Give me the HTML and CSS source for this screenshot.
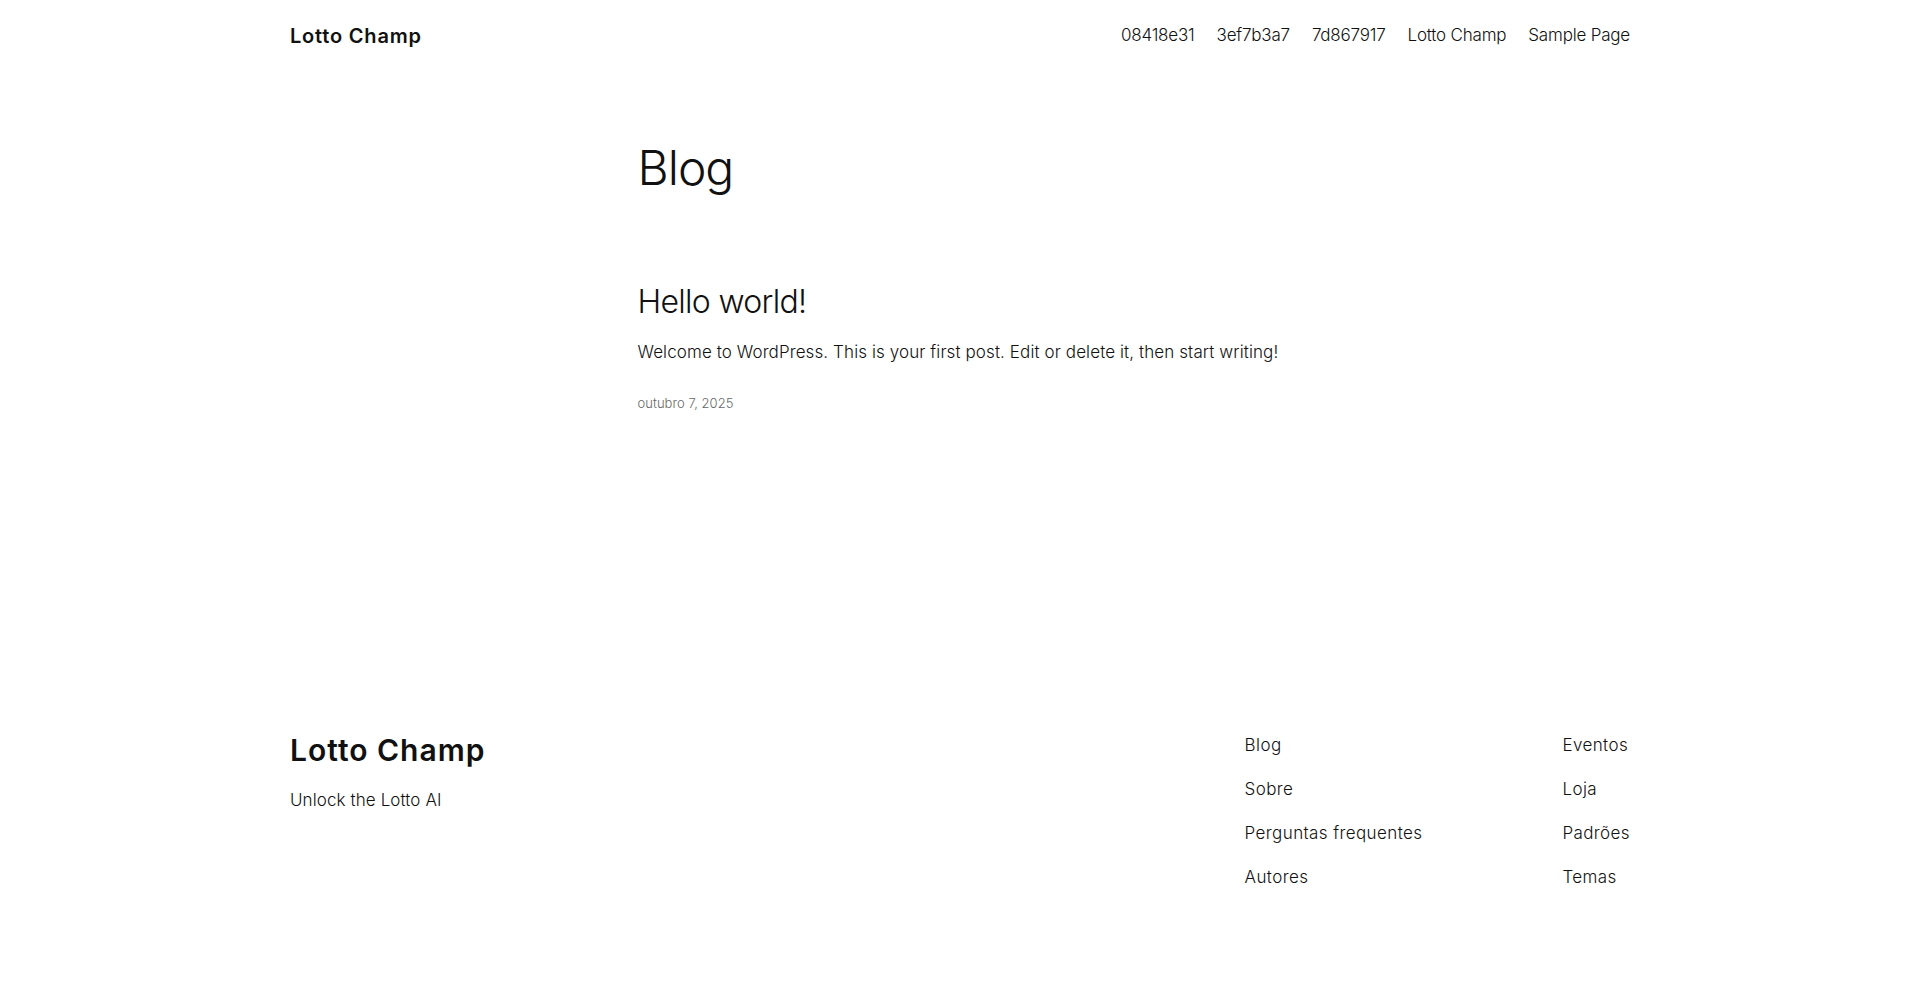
FILE: index.html
```html
<!DOCTYPE html>
<html lang="pt-BR">
<head>
<meta charset="utf-8">
<title>Blog – Lotto Champ</title>
<link rel="stylesheet" href="styles.css">
</head>
<body>
<header class="site-header">
  <div class="wide">
    <a class="site-title" href="#">Lotto Champ</a>
    <nav class="main-nav">
      <a href="#">08418e31</a>
      <a href="#">3ef7b3a7</a>
      <a href="#">7d867917</a>
      <a href="#">Lotto Champ</a>
      <a href="#">Sample Page</a>
    </nav>
  </div>
</header>
<main class="site-main">
  <div class="content">
    <h1 class="page-title">Blog</h1>
    <article class="post">
      <h2 class="post-title"><a href="#">Hello world!</a></h2>
      <p class="post-excerpt">Welcome to WordPress. This is your first post. Edit or delete it, then start writing!</p>
      <time class="post-date">outubro 7, 2025</time>
    </article>
  </div>
</main>
<footer class="site-footer">
  <div class="wide footer-inner">
    <div class="footer-brand">
      <a class="footer-title" href="#">Lotto Champ</a>
      <p class="tagline">Unlock the Lotto AI</p>
    </div>
    <div class="footer-navs">
      <nav class="footer-col">
        <a href="#">Blog</a>
        <a href="#">Sobre</a>
        <a href="#">Perguntas frequentes</a>
        <a href="#">Autores</a>
      </nav>
      <nav class="footer-col">
        <a href="#">Eventos</a>
        <a href="#">Loja</a>
        <a href="#">Padrões</a>
        <a href="#">Temas</a>
      </nav>
    </div>
  </div>
</footer>
</body>
</html>
```

FILE: styles.css
```css
* { box-sizing: border-box; }
html, body { margin: 0; padding: 0; }
body {
  background: #fff;
  color: #111111;
  font-family: Inter, "Open Sans", "Liberation Sans", sans-serif;
  font-size: 18px;
  font-weight: 300;
  line-height: 1.4;
  -webkit-font-smoothing: antialiased;
}
a { color: inherit; text-decoration: none; }
p { margin: 0; }
h1, h2 { margin: 0; font-weight: 300; }

.wide {
  width: 1340px;
  margin: 0 auto;
}

.site-header .wide {
  display: flex;
  align-items: center;
  justify-content: space-between;
  height: 71px;
}
.site-title {
  font-size: 20px;
  font-weight: 600;
  letter-spacing: 0.8px;
}
.main-nav {
  display: flex;
  gap: 22px;
  font-size: 17px;
  letter-spacing: -0.2px;
  padding-top: 1px;
}

.site-main {
  padding-top: 70px;
  min-height: 662px;
}
.content {
  width: 645px;
  margin: 0 auto;
}
.page-title {
  font-size: 48px;
  line-height: 54px;
  letter-spacing: -1px;
}
.post { margin-top: 88px; }
.post-title {
  font-size: 32px;
  line-height: 38px;
  letter-spacing: -0.7px;
}
.post-excerpt {
  margin-top: 19px;
  font-size: 17px;
  line-height: 25px;
  letter-spacing: 0.1px;
}
.post-date {
  display: block;
  margin-top: 28px;
  font-size: 13px;
  line-height: 20px;
  color: #686868;
  letter-spacing: 0.05px;
}

.footer-inner {
  display: flex;
  justify-content: space-between;
  align-items: flex-start;
}
.footer-title {
  display: block;
  font-size: 30px;
  line-height: 35px;
  font-weight: 600;
  letter-spacing: 1px;
}
.tagline {
  margin-top: 20px;
  font-size: 17px;
  line-height: 25px;
  letter-spacing: 0.1px;
}
.footer-navs {
  display: flex;
  gap: 140px;
}
.footer-col {
  display: flex;
  flex-direction: column;
  gap: 19px;
  font-size: 17px;
  line-height: 25px;
  letter-spacing: 0.4px;
}
```
